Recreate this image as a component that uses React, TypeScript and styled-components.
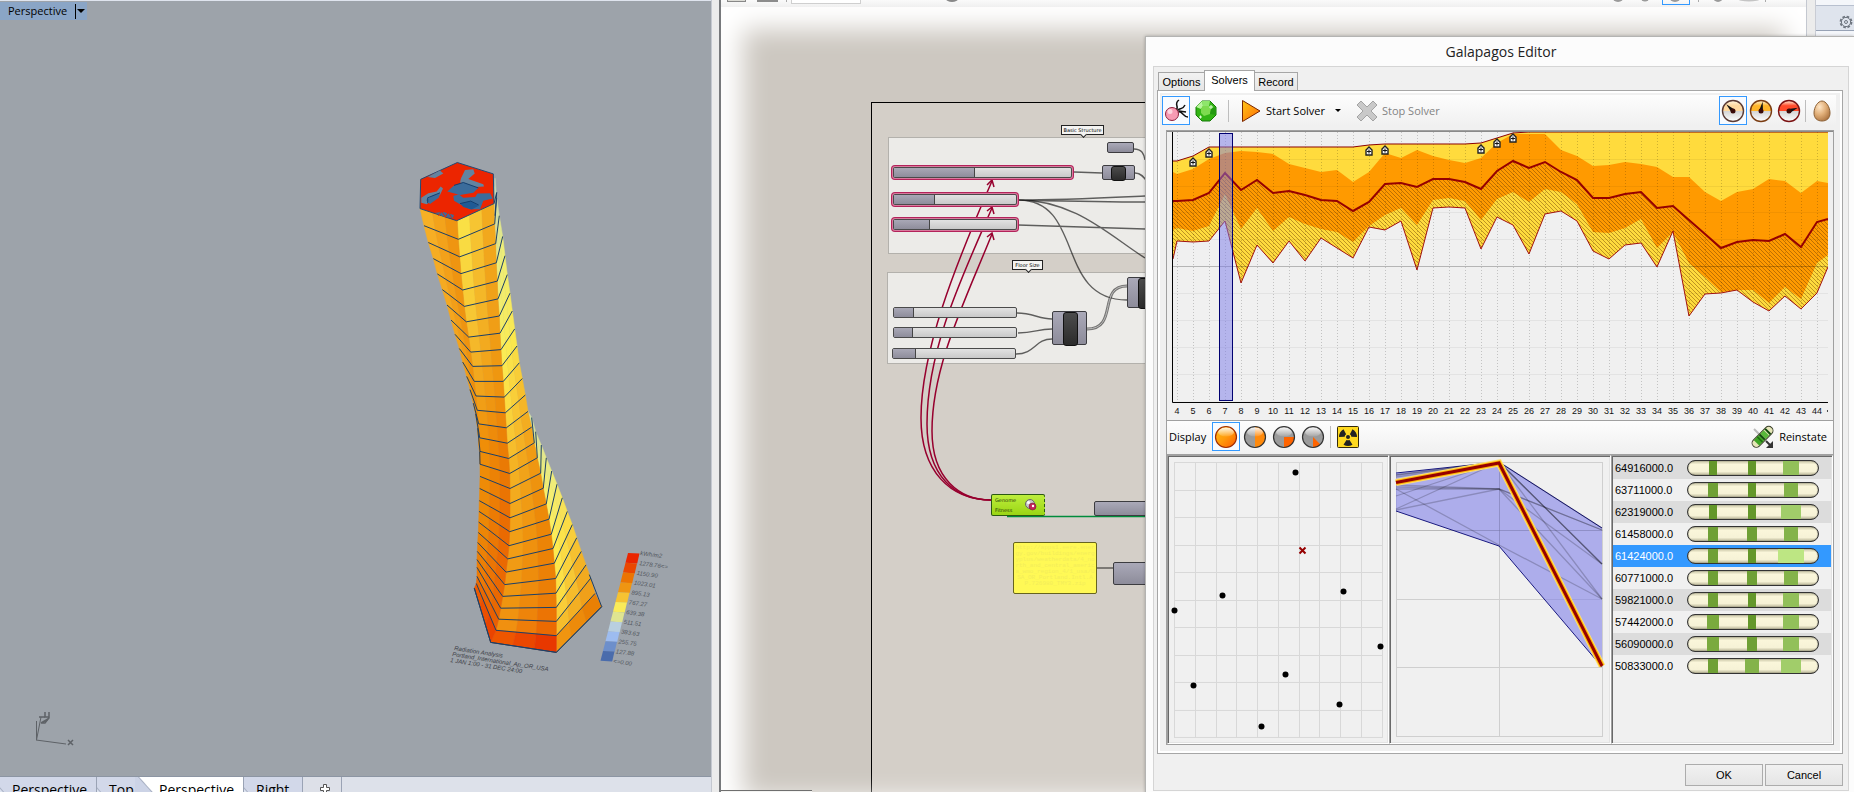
import React from "react";
import styled, { createGlobalStyle } from "styled-components";

const UI = `"Liberation Sans", Arial, sans-serif`;
const SEGOE = `"Open Sans", "Noto Sans", sans-serif`;

const GlobalStyle = createGlobalStyle`
  * { box-sizing: border-box; }
  body { margin: 0; background: #f0f0f0; font-family: ${SEGOE}; font-size: 12px; color: #000; }
  button { font: inherit; color: inherit; margin: 0; padding: 0; border: 0; background: none; }
  svg { display: block; }
`;

/* ---------- desktop ---------- */

const Desktop = styled.div`
  position: relative;
  display: grid;
  grid-template-columns: 711fr 10px 1085fr 10px 38fr;
  height: 100vh;
  overflow: hidden;
`;

const Viewport = styled.section`
  display: grid;
  grid-template-rows: 1fr 15px;
  min-width: 0;
  border-top: 1px solid #dfe4ee;
  overflow: hidden;
`;

const Scene = styled.div`
  position: relative;
  background: #9da3aa;
  border-bottom: 1px solid #8c95a3;
  overflow: hidden;
`;

const SceneDrawing = styled.svg`
  width: 711px;
  height: 775px;
`;

const ViewTitle = styled.button`
  position: absolute;
  left: 0;
  top: 1px;
  display: flex;
  align-items: center;
  height: 18px;
  padding: 0 2px 0 8px;
  background: #8aa5c6;
  font-size: 11px;
  line-height: 18px;
`;

const TitleRule = styled.span`
  width: 1px;
  height: 15px;
  margin: 0 1px 0 8px;
  background: #000;
`;

const Caret = styled.span`
  border: 4px solid transparent;
  border-top-color: #000;
  border-bottom: 0;
`;

const SmallCaret = styled(Caret)`
  border-width: 3px;
  border-bottom: 0;
`;

const ViewTabs = styled.nav`
  display: flex;
  background: #dde1ea;
  overflow: hidden;
`;

const ViewTab = styled.button<{ $w: number; $active?: boolean }>`
  flex: 0 0 ${(p) => p.$w}px;
  height: 26px;
  padding-left: ${(p) => (p.$active ? 24 : 12)}px;
  border-right: ${(p) => (p.$w === 38 ? 0 : 1)}px solid #9aa3b5;
  background: ${(p) =>
    p.$active
      ? "linear-gradient(48deg, #ccd3e6 19px, #a9b1c4 20px, #fff 21px)"
      : "linear-gradient(48deg, #dde3f0 9px, #a9b1c4 10px, #d2d8e9 11px)"};
  font-size: 14px;
  line-height: 24px;
  text-align: left;
`;

const AddViewTab = styled(ViewTab)`
  padding: 0 0 2px 17px;
  background: #dde0e8;
`;

const Splitter = styled.div<{ $dark?: boolean }>`
  background: #ececec;
  border-left: 1px solid #c4c8d0;
  border-right: ${(p) => (p.$dark ? "2px solid #77797c" : "1px solid #c9ccd4")};
`;

const Grasshopper = styled.section`
  position: relative;
  display: grid;
  grid-template-rows: 7px 1fr;
  min-width: 0;
  background: #fff;
`;

const TopBar = styled.div`
  background: linear-gradient(#fafafa, #f0f0f0);
  overflow: hidden;
`;

const StatusTip = styled.div`
  position: absolute;
  left: 0;
  bottom: 0;
  width: 91px;
  height: 2px;
  border-top: 1px solid #6f6f6f;
  background: #f4f4f2;
`;

const Canvas = styled.div`
  position: relative;
  min-width: 0;
  margin-bottom: -28px;
  background: #cdc8c1;
  overflow: hidden;
`;

const Vignette = styled.div`
  position: absolute;
  inset: 0;
  box-shadow: inset 0 0 26px 22px #fff;
  pointer-events: none;
`;

const SidePanel = styled.aside`
  padding-top: 5px;
  background: #f4f6fa;
`;

const SideTab = styled.button`
  display: flex;
  align-items: center;
  justify-content: flex-end;
  width: 100%;
  height: 26px;
  padding: 8px 1px 0 0;
  border-top: 1px solid #b8c0cf;
  border-bottom: 1px solid #97a2b5;
  background: #dfe4ed;
`;

/* ---------- node canvas ---------- */

type Box = { $x: number; $y: number; $w: number; $h: number };

const Placed = styled.div<Box>`
  position: absolute;
  left: ${(p) => p.$x}px;
  top: ${(p) => p.$y}px;
  width: ${(p) => p.$w}px;
  height: ${(p) => p.$h}px;
`;

const Frame = styled(Placed)`
  background: #d4cfc8;
  border: 1px solid #000;
`;

const Group = styled(Placed)`
  background: #ecebe8;
  border: 1px solid #b3b1ac;
`;

const Wires = styled.svg`
  position: absolute;
  left: 0;
  top: 1px;
`;

const Slider = styled(Placed)<{ $fill: number; $selected?: boolean }>`
  border: 1px solid #4a4a4a;
  border-radius: 2px;
  box-shadow: ${(p) => (p.$selected ? "0 0 0 1px #d9799d, 0 0 0 2px #b3235a" : "none")};
  background: linear-gradient(#e2e2e2, #c9c9c9);
  &::before {
    content: "";
    display: block;
    width: ${(p) => p.$fill}px;
    height: 100%;
    border-right: 1px solid #444;
    background: linear-gradient(#a9a8b6, #8e8d9b);
  }
`;

const Component = styled(Placed)<{ $core?: number; $coreW?: number }>`
  border: 1px solid #3c3c40;
  border-radius: 2px;
  background: linear-gradient(#aaa9b8, #8d8c9a);
  &::before {
    content: "";
    display: ${(p) => (p.$core ? "block" : "none")};
    width: ${(p) => p.$coreW}px;
    height: 100%;
    margin-left: ${(p) => p.$core}px;
    border-radius: 3px;
    border: 1px solid #111;
    background: linear-gradient(#4c4c4c, #2b2b2b);
  }
`;

const Callout = styled(Placed)`
  border: 1px solid #222;
  background: #f4f4f2;
  font: 5px/8px "DejaVu Sans", sans-serif;
  text-align: center;
  white-space: nowrap;
  &::after {
    content: "";
    position: absolute;
    left: calc(50% - 2px);
    top: 6px;
    width: 4px;
    height: 4px;
    border: solid #222;
    border-width: 0 1px 1px 0;
    background: #f4f4f2;
    rotate: 45deg;
  }
`;

const GalapagosNode = styled(Placed)`
  display: flex;
  align-items: center;
  justify-content: space-between;
  padding: 0 7px 0 3px;
  border: 1px solid #2b5a12;
  border-right: 1px dashed #2b5a12;
  border-radius: 2px;
  background: linear-gradient(#bdee3c, #9ad514);
  font: 5px/10px "DejaVu Sans", sans-serif;
  color: #263b08;
`;

const Note = styled(Placed)`
  padding: 2px 1px;
  border: 1px solid #66641f;
  border-radius: 2px;
  background: #fff956;
  color: #f3ed5a;
  font: 6px/6px "Liberation Mono", monospace;
  word-break: break-all;
  text-align: center;
  overflow: hidden;
`;

/* ---------- dialog ---------- */

const Dialog = styled.section`
  position: absolute;
  left: 61.76%;
  right: 0;
  top: 36px;
  padding: 0 5px 8px 7px;
  border: 1px solid #b4b4b2;
  border-right: 0;
  background: #fcfcfc;
  box-shadow: 0 0 3px rgba(0, 0, 0, 0.25);
`;

const DialogTitle = styled.h1`
  margin: 0;
  height: 29px;
  font-size: 14px;
  line-height: 30px;
  font-weight: 400;
  text-align: center;
  color: #222;
`;

const Client = styled.div`
  padding: 3px 5px 4px 3px;
  border: 1px solid #d5d5d5;
  background: #f0f0f0;
  font-family: ${UI};
  font-size: 11px;
`;

const TabStrip = styled.div`
  display: flex;
  align-items: flex-end;
  height: 20px;
  padding-left: 1px;
`;

const Tab = styled.button<{ $w: number; $active?: boolean }>`
  position: relative;
  width: ${(p) => p.$w}px;
  height: ${(p) => (p.$active ? 21 : 18)}px;
  margin-bottom: ${(p) => (p.$active ? -1 : 0)}px;
  padding-bottom: ${(p) => (p.$active ? 3 : 0)}px;
  border: 1px solid #a6a6a6;
  border-bottom: 0;
  border-right-width: ${(p) => (p.$w === 46 ? 0 : 1)}px;
  border-left-width: ${(p) => (p.$w === 43 ? 0 : 1)}px;
  background: ${(p) => (p.$active ? "#fff" : "linear-gradient(#f2f2f2, #e6e6e6)")};
  line-height: 18px;
`;

const TabPage = styled.div`
  border: 1px solid #a6a6a6;
  padding: 2px;
  background: #fff;
`;

const TabBody = styled.div`
  padding: 2px 6px 6px 6px;
  background: #f0f0f0;
`;

const Toolbar = styled.div`
  display: flex;
  align-items: center;
  background: linear-gradient(#fdfdfd, #f0f0f0);
`;

const MainToolbar = styled(Toolbar)`
  height: 31px;
  margin: 0 -2px 4px -4px;
`;

const Tool = styled.button<{ $on?: boolean }>`
  display: flex;
  align-items: center;
  justify-content: center;
  width: 28px;
  height: 29px;
  border: 1px solid ${(p) => (p.$on ? "#3399ff" : "transparent")};
  background: ${(p) => (p.$on ? "#f8fbff" : "none")};
`;

const TextTool = styled.button`
  display: flex;
  align-items: center;
  gap: 4px;
  height: 29px;
  padding: 0 4px;
  font-family: ${SEGOE};
  font-size: 11px;
  &:disabled { color: #838383; }
`;

const DropTool = styled(Tool)`
  width: 18px;
  margin-right: 5px;
`;

const Sep = styled.span<{ $tight?: boolean }>`
  width: 1px;
  height: 22px;
  margin: 0 ${(p) => (p.$tight ? 2 : 8)}px;
  background: #bdbdbd;
`;

const Gap = styled.span`
  flex: 1;
`;

const ToolPair = styled.div`
  display: flex;
  gap: 2px;
`;

const DisplayLabel = styled.span`
  margin-right: 5px;
  font-family: ${SEGOE};
  font-size: 11px;
`;

const Board = styled.div`
  border: 1px solid #a0a0a0;
  background: #f0f0f0;
`;

const ChartSvg = styled.svg`
  width: 100%;
  height: auto;
  border-top: 1px solid #8a8a8a;
`;

const DisplayBar = styled(Toolbar)`
  gap: 1px;
  height: 35px;
  padding: 0 2px 1px;
  border-top: 1px solid #a0a0a0;
  border-bottom: 1px solid #a0a0a0;
`;

const Panels = styled.div`
  display: grid;
  grid-template-columns: 1fr 1fr 1fr;
`;

const Panel = styled.div`
  height: 289px;
  border: 1px solid;
  border-color: #a0a0a0 #fff #fff #a0a0a0;
  box-shadow: inset 1px 1px #696969, inset -1px -1px #e3e3e3;
  background: #f0f0f0;
  overflow: hidden;
`;

const PanelSvg = styled.svg`
  width: 100%;
  height: 100%;
`;

const GenomeTable = styled.table`
  width: calc(100% - 2px);
  margin: 1px 0 0 1px;
  border-collapse: collapse;
`;

const GenomeRow = styled.tr<{ $selected?: boolean }>`
  height: 22px;
  &:nth-child(odd) { background: #dcdcdc; }
  &:nth-child(n) {
    ${(p) => (p.$selected ? "background: #3399ff; color: #fff;" : "")}
  }
  td { padding: 0 0 0 2px; }
  td:first-child { width: 72px; }
`;

const Capsule = styled.span`
  position: relative;
  display: grid;
  grid-template-columns: 5px 39px 39px 39px 1fr;
  justify-items: center;
  width: 132px;
  height: 16px;
  border: 1px solid #333;
  border-radius: 8px;
  background: linear-gradient(#c9c5a6, #faf6da 25%, #f6f2d6 75%, #bab698);
  box-shadow: inset 0 0 1px #222;
  overflow: hidden;
  &::before { content: ""; }
`;

const Gene = styled.i<{ $w: number; $c: string }>`
  width: ${(p) => p.$w}px;
  height: 14px;
  background: ${(p) => p.$c};
`;

const Footer = styled.div`
  display: flex;
  justify-content: flex-end;
  gap: 2px;
  padding: 10px 0 0;
`;

const PushButton = styled.button`
  width: 78px;
  height: 22px;
  border: 1px solid #acacac;
  background: linear-gradient(#f1f1f1, #e5e5e5);
  line-height: 20px;
`;

/* ---------- tower ---------- */

type Pt = [number, number];
const tp = ([x, y]: Pt): Pt => [380 + x / 3, 130 + y * 0.3571];

const colL: Pt[] = [[120, 220], [132, 268], [145, 315], [160, 360], [172, 403], [187, 447], [201, 490], [213, 532], [225, 572], [238, 612], [248, 650], [260, 690], [270, 727], [280, 765], [287, 795], [293, 835], [299, 900]];
const colM: Pt[] = [[232, 254], [235, 306], [239, 355], [243, 402], [248, 448], [253, 494], [259, 537], [266, 580], [272, 622], [278, 662], [283, 704], [288, 745], [292, 785], [296, 823], [299, 862], [300, 900], [300, 936], [300, 970], [299, 1004], [298, 1038], [297, 1068], [296, 1098], [295, 1127], [293, 1155], [292, 1180], [291, 1203], [291, 1225], [291, 1250], [289, 1270], [283, 1283]];
const colR: Pt[] = [[342, 206], [344, 263], [347, 318], [349, 372], [352, 423], [354, 473], [358, 521], [360, 569], [363, 615], [366, 660], [370, 704], [373, 748], [376, 792], [379, 834], [382, 877], [386, 920], [389, 962], [390, 1004], [390, 1046], [390, 1086], [389, 1125], [387, 1164], [383, 1201], [378, 1238], [374, 1273], [368, 1306], [362, 1339], [356, 1370], [348, 1401], [332, 1435]];
const colF: Pt[] = [[345, 135], [350, 190], [358, 240], [368, 298], [375, 352], [382, 405], [390, 457], [397, 507], [404, 557], [411, 605], [418, 652], [427, 696], [436, 742], [444, 788], [455, 832], [463, 876], [472, 918], [482, 961], [490, 1003], [499, 1047], [507, 1090], [514, 1132], [519, 1172], [523, 1213], [527, 1256], [528, 1297], [529, 1337], [529, 1376], [529, 1416], [529, 1463]];
const colG: Pt[] = [[444, 788], [455, 805], [467, 845], [484, 882], [499, 918], [515, 955], [531, 992], [547, 1030], [562, 1068], [577, 1105], [590, 1142], [604, 1180], [618, 1218], [632, 1255], [645, 1298], [665, 1335]];

type Stop = [number, string, string];
const faces: { a: Pt[]; b: Pt[]; from: number; bOff: number; n: number; stops: Stop[] }[] = [
  { a: colL, b: colM, from: 0, bOff: 0, n: 16, stops: [[0, "f7b025", "ef9511"], [8, "f3a31c", "ee930f"], [16, "ee9008", "ea8000"]] },
  { a: colM, b: colR, from: 0, bOff: 0, n: 29, stops: [[0, "fae045", "f2aa1e"], [5, "f7c734", "f0a018"], [9, "f2a81f", "ef9710"], [14, "ef8e08", "ea7d04"], [20, "ec8806", "ea6a02"], [26, "ec7a05", "e96802"], [27, "ea6a02", "ea6002"], [28, "ee5a00", "ea4400"]] },
  { a: colR, b: colF, from: 0, bOff: 0, n: 29, stops: [[0, "cddcae", "c5d8b4"], [3, "e8ec80", "eeee78"], [8, "fbec55", "fbe84c"], [11, "fbdc43", "f6bf2e"], [15, "f4b324", "f09b14"], [20, "f19f16", "ec8606"], [25, "ef9510", "ec7d06"], [27, "f09010", "eb6a02"], [28, "ee5600", "e83800"]] },
  { a: colF, b: colG, from: 14, bOff: -14, n: 29, stops: [[14, "e6ec80", "cfe0a8"], [19, "f9f06a", "f0ec78"], [22, "fdea50", "fbdc45"], [25, "fbdd43", "f3b326"], [27, "f6bd2c", "f0a01a"], [28, "f09510", "e98004"]] },
];

const mixHex = (a: string, b: string, t: number) =>
  "#" + [0, 2, 4].map((i) => {
    const u = parseInt(a.slice(i, i + 2), 16);
    const v = parseInt(b.slice(i, i + 2), 16);
    return Math.round(u + (v - u) * t).toString(16).padStart(2, "0");
  }).join("");

const shade = (stops: Stop[], k: number, t: number) => {
  let i = 0;
  while (i < stops.length - 2 && stops[i + 1][0] <= k) i++;
  const [k0, a0, b0] = stops[i];
  const [k1, a1, b1] = stops[i + 1];
  const u = Math.min(1, Math.max(0, (k - k0) / (k1 - k0)));
  return mixHex(mixHex(a0, a1, u).slice(1), mixHex(b0, b1, u).slice(1), t);
};

const lerp = (a: Pt, b: Pt, t: number): Pt => [a[0] + (b[0] - a[0]) * t, a[1] + (b[1] - a[1]) * t];
const join = (pts: Pt[]) => pts.map((p) => tp(p).map((v) => v.toFixed(1)).join(",")).join(" ");

function Tower() {
  const quads: React.ReactNode[] = [];
  const slabs: React.ReactNode[] = [];
  [...faces].reverse().forEach((f, fi) => {
    for (let k = f.from; k < f.n; k++) {
      const a0 = f.a[k], a1 = f.a[k + 1], b0 = f.b[k + f.bOff], b1 = f.b[k + 1 + f.bOff];
      for (let s = 0; s < 3; s++) {
        const c = shade(f.stops, k, s / 2);
        quads.push(
          <polygon key={`${fi}-${k}-${s}`} fill={c} stroke={c} strokeWidth="0.5"
            points={join([lerp(a0, b0, s / 3), lerp(a0, b0, (s + 1) / 3), lerp(a1, b1, (s + 1) / 3), lerp(a1, b1, s / 3)])} />
        );
      }
      slabs.push(<polyline key={`${fi}-${k}`} points={join([a1, b1])} />);
    }
  });
  return (
    <g>
      {quads}
      <g fill="none" stroke="#1c4068" strokeWidth="1">
        {slabs}
        <polyline points={join([[283, 1283], [332, 1435], [529, 1463], [665, 1335], [628, 1245]])} />
        <polyline points={join([[342, 206], [350, 175], [345, 240]])} />
      </g>
      <polygon fill="#ec2500" stroke="#234a74" points={join([[232, 91], [340, 123], [342, 206], [230, 254], [120, 220], [122, 138]])} />
      <g fill="#6384a0">
        <polygon points={join([[143, 132], [180, 113], [190, 122], [165, 134]])} />
        <polygon points={join([[243, 135], [255, 112], [280, 110], [284, 122], [265, 137], [310, 152], [312, 158], [285, 160], [240, 147]])} />
        <polygon points={join([[124, 190], [145, 177], [170, 172], [182, 158], [189, 164], [180, 182], [140, 208], [124, 204]])} />
      </g>
      <g fill="#3b6c9b">
        <polygon points={join([[202, 172], [222, 155], [250, 147], [295, 162], [280, 176], [240, 182]])} />
        <polygon points={join([[138, 196], [160, 182], [180, 178], [176, 190], [150, 207]])} />
        <polygon points={join([[220, 185], [236, 180], [250, 190], [286, 188], [292, 178], [330, 177], [338, 192], [310, 198], [300, 222], [270, 222], [240, 208], [222, 198]])} />
        <polygon points={join([[165, 232], [190, 230], [222, 238], [218, 247], [190, 242]])} />
      </g>
      <polygon fill="#1f5a95" points={join([[240, 206], [272, 199], [296, 212], [275, 223], [250, 216]])} />
      <g stroke="#123f70" fill="none">
        <polyline points={join([[222, 155], [250, 147], [295, 162]])} />
        <polyline points={join([[143, 205], [143, 190], [180, 176]])} />
        <polyline points={join([[240, 206], [272, 199], [296, 210]])} />
      </g>
      <polyline fill="none" stroke="#ec2500" points={join([[175, 240], [185, 228], [196, 244], [205, 230], [215, 246]])} />
    </g>
  );
}

const legend = ["#ea2500", "#ea4700", "#ec7402", "#ef9512", "#f6c332", "#faeb59", "#dfe491", "#b9cfdf", "#9dbcf0", "#6d8fcb", "#4a6cac"];
const legendText = ["1278.76<=", "1150.90", "1023.01", "895.13", "767.27", "639.38", "511.51", "383.63", "255.75", "127.88", "<=0.00"];

function SceneView() {
  return (
    <SceneDrawing viewBox="0 1 711 775">
      <Tower />
      {legend.map((c, i) => {
        const x = 628 - i * 2.5, y = 553 + i * 9.8;
        return <polygon key={c} fill={c} points={`${x},${y} ${x + 11.5},${y + 0.6} ${x + 9.2},${y + 10.6} ${x - 2.5},${y + 9.8}`} />;
      })}
      <g fontFamily="Liberation Sans" fontStyle="italic" fontSize="6" fill="#50555c">
        <text transform="translate(640 555) rotate(8)">kWh/m2</text>
        {legendText.map((t, i) => (
          <text key={t} transform={`translate(${639 - i * 2.6} ${565 + i * 9.8}) rotate(8)`}>{t}</text>
        ))}
      </g>
      <g fontFamily="Liberation Sans" fontStyle="italic" fontSize="6" fill="#3c4046">
        <text transform="translate(454 650) rotate(9)">Radiation Analysis</text>
        <text transform="translate(452 656) rotate(9)">Portland_International_Ap_OR_USA</text>
        <text transform="translate(450 662) rotate(9)">1 JAN 1:00 - 31 DEC 24:00</text>
      </g>
      <g fill="none" stroke="#5e6267" transform="translate(0 1)">
        <path d="M36.500 720 V739 L41 716 M36 739 L66 743" />
        <path d="M39 716 h6 M41 722 l7 -4 M41 722 h4 l3 -4" strokeWidth="1.500" />
        <path d="M45 711 v5 h4 M49 711 v6 l-3 3" strokeWidth="1.500" />
        <path d="M68 739 l5 5 M73 739 l-5 5" strokeWidth="1.500" />
      </g>
    </SceneDrawing>
  );
}

/* ---------- toolbar icons ---------- */

const SolverIcon = () => (
  <svg width="24" height="24" viewBox="0 0 24 24">
    <path d="M12 11 C16 8 9 5 15 1 M13 12 C17 7 18 12 21 6 M14 13 C18 11 19 18 24 18 M15 12 l7 1" fill="none" stroke="#111" strokeWidth="1.500" />
    <circle cx="8" cy="15" r="6.500" fill="#f79bb3" stroke="#8e1f3c" />
    <circle cx="6" cy="12.500" r="2.500" fill="#fdd5df" />
  </svg>
);

const GemIcon = () => (
  <svg width="22" height="22" viewBox="0 0 22 22">
    <polygon points="7,1 15,1 21,7 21,15 15,21 7,21 1,15 1,7" fill="#33b414" stroke="#157a06" />
    <polygon points="7,1 15,1 14,6 8,6" fill="#8ee66b" />
    <polygon points="1,7 7,1 8,6 6,9" fill="#b8f59c" />
    <polygon points="8,6 14,6 16,9 15,14 9,16 6,13 6,9" fill="#7edb4f" />
    <polygon points="16,9 21,7 21,15 15,14" fill="#249a10" />
    <path d="M4 17 l3 0 M5.500 15.500 v3 M14 7 h4 M16 5 v4" stroke="#e6ffda" />
  </svg>
);

const PlayIcon = () => (
  <svg width="21" height="24" viewBox="0 0 21 24">
    <defs><linearGradient id="play" x1="0" y1="0" x2="1" y2="1"><stop offset="0" stopColor="#ffc61a" /><stop offset="1" stopColor="#ff6a00" /></linearGradient></defs>
    <polygon points="1.500,1.500 19,12 1.500,22.500" fill="url(#play)" stroke="#7a2600" />
  </svg>
);

const StopIcon = () => (
  <svg width="22" height="22" viewBox="0 0 22 22">
    <path d="M5 1 L11 7 L17 1 L21 5 L15 11 L21 17 L17 21 L11 15 L5 21 L1 17 L7 11 L1 5 Z" fill="#c9c9c9" stroke="#a3a3a3" />
  </svg>
);

const GaugeIcon = ({ id, top, rim, angle }: { id: string; top: string; rim: string; angle: number }) => (
  <svg width="24" height="24" viewBox="0 0 24 24">
    <defs>
      <linearGradient id={id} x1="0" x2="0" y1="0" y2="1">
        <stop offset="0" stopColor="#fff6e0" /><stop offset="0.25" stopColor={top} /><stop offset="0.5" stopColor={top} />
        <stop offset="0.5" stopColor="#d4d4d4" /><stop offset="1" stopColor="#fff" />
      </linearGradient>
    </defs>
    <circle cx="12" cy="12" r="10.500" fill={`url(#${id})`} stroke={rim} strokeWidth="1.400" />
    <g transform={`rotate(${angle} 12 12)`}><polygon points="10,12 12,2.500 14,12" fill="#111" /></g>
    <circle cx="12" cy="12" r="2.500" fill="#3a0a08" />
  </svg>
);

const EggIcon = () => (
  <svg width="20" height="24" viewBox="0 0 20 24">
    <defs><radialGradient id="egg" cx="0.35" cy="0.3" r="0.8"><stop offset="0" stopColor="#ffe6c6" /><stop offset="0.5" stopColor="#e0ae78" /><stop offset="1" stopColor="#a86f3c" /></radialGradient></defs>
    <path d="M10 2 C14 2 18 8 18 14 C18 19 15 22 10 22 C5 22 2 19 2 14 C2 8 6 2 10 2 Z" fill="url(#egg)" stroke="#8c6136" />
  </svg>
);

const pie = ["", "M12 12 V1.500 A10.500 10.500 0 0 1 12 22.500 Z", "M12 12 H22.500 A10.500 10.500 0 0 1 12 22.500 Z", "M12 12 L19.400 19.400 A10.500 10.500 0 0 1 12 22.500 Z"];

const PieIcon = ({ n }: { n: number }) => (
  <svg width="24" height="24" viewBox="0 0 24 24">
    <defs>
      <linearGradient id={`hot${n}`} x1="0" y1="0" x2="1" y2="1"><stop offset="0" stopColor="#ffbf1a" /><stop offset="0.5" stopColor="#ff9a0a" /><stop offset="1" stopColor="#ff5a00" /></linearGradient>
      <linearGradient id={`shine${n}`} x1="0" y1="0" x2="0" y2="1"><stop offset="0" stopColor="#fff" stopOpacity="0.9" /><stop offset="1" stopColor="#fff" stopOpacity="0.1" /></linearGradient>
    </defs>
    <circle cx="12" cy="12" r="10.500" fill={n === 0 ? `url(#hot${n})` : "#9b9b9b"} />
    {n > 0 && <path d={pie[n]} fill={n === 1 ? "#ff8a0c" : "#ff6400"} />}
    <ellipse cx="12" cy="7" rx="8" ry="4.500" fill={`url(#shine${n})`} />
    <circle cx="12" cy="12" r="10.500" fill="none" stroke={n === 0 ? "#a02c00" : "#333"} strokeWidth="1.200" />
  </svg>
);

const RadiationIcon = () => (
  <svg width="22" height="22" viewBox="0 0 22 22">
    <rect x="0.500" y="0.500" width="21" height="21" rx="1" fill="#ffd91f" stroke="#33290a" />
    {[0, 120, 240].map((a) => (
      <path key={a} transform={`rotate(${a} 11 11)`} d="M9.500 14 L6.500 18.800 A9 9 0 0 0 15.500 18.800 L12.500 14 A3.400 3.400 0 0 1 9.500 14 Z" fill="#222" />
    ))}
    <circle cx="11" cy="11" r="2" fill="#222" />
  </svg>
);

const ReinstateIcon = () => (
  <svg width="24" height="24" viewBox="0 0 24 24">
    <path d="M3 4 l6 6" stroke="#bbb" strokeWidth="2" />
    <g transform="rotate(-45 11 12)">
      <rect x="-1.500" y="8" width="26" height="8.500" rx="4.200" fill="#e6e6b8" stroke="#3a3f2a" />
      <rect x="3" y="8.500" width="7" height="7.500" fill="#3fa524" /><rect x="12" y="8.500" width="5" height="7.500" fill="#59b83b" />
      <rect x="10" y="8.500" width="2" height="7.500" fill="#0e4a0a" /><rect x="18" y="8.500" width="2" height="7.500" fill="#0e4a0a" />
      <rect x="7" y="8.500" width="1.500" height="7.500" fill="#1f6f12" />
    </g>
    <path d="M15 16 l5 5" stroke="#333" strokeWidth="2" />
    <path d="M22 16 v7 h-7 Z" fill="#333" />
  </svg>
);

/* ---------- fitness chart ---------- */

const gens = Array.from({ length: 41 }, (_, i) => i + 4);
const gx = (g: number) => 10 + (g - 4) * 16;
const xs = [6, ...gens.map(gx), 661];

const best = [29, 29, 24, 15, 15, 15, 15, 15, 15, 15, 15, 15, 15, 13, 12, 12, 12, 12, 12, 12, 11, 6, 1, ...Array(20).fill(0)];
const upper = [40, 42, 37, 27, 21, 19, 20, 22, 32, 36, 40, 38, 50, 40, 21, 26, 18, 24, 28, 31, 26, 11, 2, 2, 2, 18, 24, 34, 33, 30, 32, 35, 45, 45, 60, 69, 60, 57, 47, 49, 61, 49, 51];
const mean = [69, 69, 68, 61, 41, 58, 48, 61, 59, 63, 68, 69, 79, 70, 52, 51, 55, 47, 47, 50, 57, 39, 29, 36, 30, 40, 48, 66, 66, 62, 60, 76, 74, 88, 102, 116, 110, 108, 109, 102, 115, 90, 87];
const lower = [98, 96, 99, 94, 62, 97, 76, 99, 85, 92, 97, 100, 110, 94, 83, 76, 93, 68, 66, 69, 88, 67, 60, 70, 57, 60, 72, 100, 101, 96, 87, 116, 100, 131, 145, 160, 158, 158, 171, 155, 167, 131, 123];
const worst = [127, 109, 110, 109, 89, 151, 113, 131, 109, 129, 106, 116, 126, 95, 98, 89, 138, 76, 75, 76, 117, 85, 93, 122, 82, 79, 89, 119, 127, 113, 111, 135, 99, 184, 162, 161, 158, 170, 179, 164, 177, 161, 135];

const line = (ys: number[]) => ys.map((y, i) => `${xs[i]},${y}`).join(" ");
const band = (a: number[], b: number[]) =>
  line(a) + " " + b.map((y, i) => `${xs[i]},${y}`).reverse().join(" ");

const marks: Pt[] = [[5, 31], [6, 22], [16, 20], [17, 19], [23, 18], [24, 12], [25, 7]];

function FitnessChart() {
  return (
    <ChartSvg viewBox="0 0 666 288">
      <defs>
        <pattern id="hatch" width="4" height="4" patternUnits="userSpaceOnUse">
          <path d="M-1 -1 L5 5 M-1 3 L1 5 M3 -1 L5 1" stroke="#6b3a00" strokeOpacity="0.5" strokeWidth="0.900" />
        </pattern>
        <clipPath id="plot"><rect x="5" y="0" width="656" height="288" /></clipPath>
      </defs>
      <g clipPath="url(#plot)">
        <polygon points={band(best, worst)} fill="#ffdb3d" />
        <polygon points={band(upper, lower)} fill="#ff9a00" />
        <polygon points={band(mean, worst)} fill="url(#hatch)" />
        {gens.map((g) => (
          <line key={g} x1={gx(g) + 0.5} x2={gx(g) + 0.5} y1="0" y2="270" stroke="#000" strokeOpacity="0.2" strokeDasharray="1 2" />
        ))}
        {[28, 55, 81, 108, 162, 189, 216, 243].map((y) => (
          <line key={y} x1="6" x2="661" y1={y - 0.5} y2={y - 0.5} stroke="#000" strokeOpacity="0.06" />
        ))}
        <line x1="6" x2="661" y1="134.500" y2="134.500" stroke="#000" strokeOpacity="0.25" />
        <polyline points={line(best)} fill="none" stroke="#8b0000" />
        <polyline points={line(worst)} fill="none" stroke="#a01010" />
        <polyline points={line(mean)} fill="none" stroke="#960000" strokeWidth="2" />
        {marks.map(([g, y]) => (
          <g key={g} transform={`translate(${gx(g)} ${y - 1})`}>
            <path d="M-3 4 V-1 L0 -4 L3 -1 V4 Z" fill="#f4f4f4" stroke="#222" strokeWidth="1.400" />
            <path d="M0 -1.500 V2.500 M-2 0.500 H2" stroke="#111" />
          </g>
        ))}
        <rect x="52.500" y="1.500" width="13" height="267" fill="#7a7ae8" fillOpacity="0.5" stroke="#000070" />
        <g fontFamily="Liberation Sans" fontSize="9" textAnchor="middle" fill="#111">
          {gens.map((g) => <text key={g} x={gx(g)} y="282">{g}</text>)}
        </g>
        <rect x="660" y="278" width="1" height="2" fill="#444" />
      </g>
      <path d="M5.500 0 V270.500 H661" fill="none" stroke="#000" />
    </ChartSvg>
  );
}

const dots: Pt[] = [[126, 15], [53, 138], [5, 153], [174, 134], [211, 189], [116, 217], [24, 228], [170, 247], [92, 269]];

function GenomeMap() {
  const steps = Array.from({ length: 11 }, (_, i) => i);
  return (
    <PanelSvg viewBox="-1 -1 220 287" preserveAspectRatio="xMinYMin meet">
      <g stroke="#d8d8d8">
        {steps.map((i) => <line key={i} x1={Math.round(5 + i * 20.75) + 0.5} x2={Math.round(5 + i * 20.75) + 0.5} y1="5" y2="281" />)}
        {steps.map((i) => <line key={i} y1={Math.round(5 + i * 27.5) + 0.5} y2={Math.round(5 + i * 27.5) + 0.5} x1="5" x2="213" />)}
      </g>
      {dots.map(([x, y]) => <circle key={x} cx={x + 0.5} cy={y + 0.5} r="3" />)}
      <path d="M130.500 90.500 l6 6 M136.500 90.500 l-6 6" stroke="#960000" strokeWidth="2" />
    </PanelSvg>
  );
}

const traces = ["5,18 108,5 211,71", "5,32 108,32 211,73", "5,28 108,32 211,142", "5,39 108,5 211,107", "5,52 108,5 211,107", "5,53 108,32 211,107", "5,32 108,88 211,142", "5,18 108,5 211,107", "5,20 108,5 211,142", "5,30 108,32 211,73"];

function GenomeGraph() {
  return (
    <PanelSvg viewBox="-1 -1 220 287" preserveAspectRatio="xMinYMin meet">
      <path d="M5 5.500 H212 M5 73.500 H212 M5 142.500 H212 M5 210.500 H212 M5 279.500 H212 M5.500 5 V279 M108.500 5 V279 M211.500 5 V279" stroke="#cfcfcf" />
      <polygon points="5,16 108,5 211,71 211,210 108,89 5,54" fill="#8080e8" fillOpacity="0.6" />
      <path d="M5 16 L108 5 L211 71 M5 54 L108 89 L211 210" fill="none" stroke="#1a1a80" />
      <path d="M5 73.500 H212 M108.500 5 V89" stroke="#000" strokeOpacity="0.1" />
      <g fill="none" stroke="#000" strokeOpacity="0.2" strokeWidth="1.300">
        {traces.map((t) => <polyline key={t} points={t} />)}
      </g>
      <polyline points="5,25.500 108,6 211,209" fill="none" stroke="#ffe070" strokeWidth="7" />
      <polyline points="5,25.500 108,6 211,209" fill="none" stroke="#ffb400" strokeWidth="5" />
      <polyline points="5,25.500 108,6 211,209" fill="none" stroke="#960000" strokeWidth="3" />
    </PanelSvg>
  );
}

const geneColor: Record<number, string> = { 8: "#64972a", 10: "#6fa035", 12: "#7aaa3e", 14: "#84b34a", 16: "#92c05a", 20: "#a1cd6a", 26: "#bde683" };
const genomes: [string, number[]][] = [
  ["64916000.0", [8, 8, 16]],
  ["63711000.0", [10, 8, 14]],
  ["62319000.0", [8, 8, 20]],
  ["61458000.0", [10, 10, 14]],
  ["61424000.0", [10, 8, 26]],
  ["60771000.0", [10, 10, 14]],
  ["59821000.0", [10, 8, 16]],
  ["57442000.0", [12, 8, 16]],
  ["56090000.0", [12, 10, 16]],
  ["50833000.0", [10, 14, 20]],
];

function GalapagosDialog() {
  return (
    <Dialog aria-label="Galapagos Editor">
      <DialogTitle>Galapagos Editor</DialogTitle>
      <Client>
        <TabStrip role="tablist">
          <Tab $w={46} role="tab">Options</Tab>
          <Tab $w={51} $active role="tab">Solvers</Tab>
          <Tab $w={43} role="tab">Record</Tab>
        </TabStrip>
        <TabPage>
          <TabBody>
            <MainToolbar>
              <ToolPair>
                <Tool $on aria-label="Evolutionary solver"><SolverIcon /></Tool>
                <Tool aria-label="Annealing solver"><GemIcon /></Tool>
              </ToolPair>
              <Sep />
              <TextTool><PlayIcon />Start Solver</TextTool>
              <DropTool aria-label="Solver options"><SmallCaret /></DropTool>
              <TextTool disabled><StopIcon />Stop Solver</TextTool>
              <Gap />
              <Tool $on aria-label="Slow"><GaugeIcon id="g1" top="#ffd9a0" rim="#5a3a34" angle={-45} /></Tool>
              <Tool aria-label="Medium"><GaugeIcon id="g2" top="#ffb52a" rim="#7a3c12" angle={10} /></Tool>
              <Tool aria-label="Fast"><GaugeIcon id="g3" top="#ff4a2a" rim="#7a1010" angle={70} /></Tool>
              <Sep $tight />
              <Tool aria-label="Bake"><EggIcon /></Tool>
            </MainToolbar>
            <Board>
              <FitnessChart />
              <DisplayBar>
                <DisplayLabel>Display</DisplayLabel>
                {[0, 1, 2, 3].map((n) => (
                  <Tool key={n} $on={n === 0} aria-label={`Display level ${n + 1}`}><PieIcon n={n} /></Tool>
                ))}
                <Sep $tight />
                <Tool aria-label="Radiate"><RadiationIcon /></Tool>
                <Gap />
                <TextTool><ReinstateIcon />Reinstate</TextTool>
              </DisplayBar>
              <Panels>
                <Panel><GenomeMap /></Panel>
                <Panel><GenomeGraph /></Panel>
                <Panel>
                  <GenomeTable>
                    <tbody>
                      {genomes.map(([value, genes], i) => (
                        <GenomeRow key={value} $selected={i === 4}>
                          <td>{value}</td>
                          <td>
                            <Capsule>
                              {genes.map((w, j) => <Gene key={j} $w={w} $c={geneColor[w]} />)}
                            </Capsule>
                          </td>
                        </GenomeRow>
                      ))}
                    </tbody>
                  </GenomeTable>
                </Panel>
              </Panels>
            </Board>
          </TabBody>
        </TabPage>
        <Footer>
          <PushButton>OK</PushButton>
          <PushButton>Cancel</PushButton>
        </Footer>
      </Client>
    </Dialog>
  );
}

function NodeCanvas() {
  return (
    <Canvas>
      <Frame $x={150} $y={95} $w={900} $h={760} />
      <Group $x={167} $y={130} $w={700} $h={117} />
      <Group $x={166} $y={265} $w={700} $h={92} />
      <Wires width="440" height="600" viewBox="0 0 440 600" fill="none">
        <g stroke="#97002e" strokeWidth="1.500">
          <path d="M270 492 C229 492 200 463 200 410 C200 343 234 258 271 173" />
          <path d="M270 492 C234 492 206 468 206 416 C206 343 239 273 271 200" />
          <path d="M270 492 C239 492 211 471 211 423 C211 358 244 293 271 226" />
          <path d="M266 177 L271 172 L273 179 M266 203 L271 199 L273 206 M266 229 L271 225 L273 232" />
        </g>
        <g stroke="#000" strokeOpacity="0.6" strokeWidth="1.400">
          <path d="M353 164 L381 165 M297 192 C340 192 380 190 424 188 M297 192 C340 193 380 194 424 194" />
          <path d="M297 192 C354 192 389 228 424 250 M297 192 C364 192 334 292 406 292 M297 217 L424 221" />
          <path d="M413 141 C421 141 423 146 424 152 M414 165 C420 165 423 169 426 174" />
          <path d="M296 305 C312 305 318 311 331 311 M297 325 C314 325 316 321 331 321 M295 346 C314 346 314 331 331 331" />
          <path d="M366 321 C398 321 376 278 406 278" strokeWidth="3" strokeOpacity="0.5" />
          <path d="M366 321 C398 321 376 278 406 278" stroke="#bbb" strokeWidth="1" strokeOpacity="1" />
          <path d="M375 560 H392" />
        </g>
        <path d="M286 508.500 H440" stroke="#008c3c" strokeWidth="1.500" />
      </Wires>
      <Callout $x={340} $y={118} $w={43} $h={10}>Basic Structure</Callout>
      <Callout $x={291} $y={253} $w={31} $h={10}>Floor Size</Callout>
      <Slider $x={172} $y={160} $w={179} $h={11} $fill={80} $selected />
      <Slider $x={172} $y={187} $w={124} $h={11} $fill={40} $selected />
      <Slider $x={172} $y={212} $w={124} $h={11} $fill={35} $selected />
      <Slider $x={172} $y={300} $w={124} $h={11} $fill={19} />
      <Slider $x={172} $y={320} $w={124} $h={11} $fill={18} />
      <Slider $x={171} $y={341} $w={124} $h={11} $fill={22} />
      <Component $x={386} $y={135} $w={27} $h={11} />
      <Component $x={381} $y={158} $w={33} $h={15} $core={8} $coreW={13} />
      <Component $x={331} $y={304} $w={35} $h={34} $core={10} $coreW={13} />
      <Component $x={406} $y={270} $w={36} $h={31} $core={10} $coreW={14} />
      <GalapagosNode $x={270} $y={487} $w={54} $h={22}>
        <div>Genome<br />Fitness</div>
        <svg width="12" height="12" viewBox="0 0 12 12">
          <circle cx="5" cy="5" r="4.500" fill="#c9c9c9" stroke="#666" />
          <circle cx="3.500" cy="3.500" r="1.500" fill="#fff" />
          <circle cx="7.500" cy="7.500" r="3.500" fill="#c2245a" stroke="#6a1030" strokeWidth="0.500" /><circle cx="8" cy="7" r="1.200" fill="#fff" />
        </svg>
      </GalapagosNode>
      <Component $x={373} $y={494} $w={70} $h={15} />
      <Note $x={292} $y={535} $w={84} $h={52}>
        http://apps1.eere.energy.gov/buildings/energyplus/weatherdata/4_north_and_central_america_wmo_region_4/1_usa/USA_OR_Portland.Intl.AP.726980_TMY3.zip
      </Note>
      <Component $x={392} $y={555} $w={60} $h={23} />
      <Vignette />
    </Canvas>
  );
}

export default function App() {
  return (
    <Desktop>
      <GlobalStyle />
      <Viewport>
        <Scene>
          <SceneView />
          <ViewTitle>Perspective<TitleRule /><Caret /></ViewTitle>
        </Scene>
        <ViewTabs>
          <ViewTab $w={97}>Perspective</ViewTab>
          <ViewTab $w={38}>Top</ViewTab>
          <ViewTab $w={109} $active>Perspective</ViewTab>
          <ViewTab $w={59}>Right</ViewTab>
          <AddViewTab $w={39} aria-label="New viewport">
            <svg width="10" height="10" viewBox="0 0 10 10">
              <path d="M3.500 .5 h3 v3 h3 v3 h-3 v3 h-3 v-3 h-3 v-3 h3 Z" fill="#fff" stroke="#555" />
            </svg>
          </AddViewTab>
        </ViewTabs>
      </Viewport>
      <Splitter $dark />
      <Grasshopper>
        <TopBar>
          <svg width="1085" height="7" viewBox="0 0 1085 7">
            <rect x="6.500" y="-8" width="18" height="9.500" fill="#dcdcd6" stroke="#888" />
            <path d="M36 0 h21 v2 h-21 Z" fill="#8c8c8c" />
            <path d="M65.500 0 V2" stroke="#aaa" />
            <rect x="70.500" y="-8" width="69" height="11.500" fill="#fff" stroke="#cfcfcf" />
            <ellipse cx="231" cy="-1" rx="6" ry="3" fill="#888" />
            <g fill="#9a9a9a"><circle cx="897" cy="-4" r="6" /><circle cx="924" cy="-3" r="4.500" /><circle cx="954" cy="-4" r="6" /><circle cx="997" cy="-3" r="5" /></g>
            <ellipse cx="1028" cy="-1" rx="11" ry="2.500" fill="#c4c4c4" />
            <rect x="941.500" y="-8" width="27" height="12.500" fill="none" stroke="#3399ff" />
            <path d="M977.500 0 V2 M1044.500 0 V2" stroke="#aaa" />
          </svg>
        </TopBar>
        <NodeCanvas />
        <StatusTip />
      </Grasshopper>
      <Splitter />
      <SidePanel>
        <SideTab aria-label="Panel options">
          <svg width="14" height="14" viewBox="0 0 14 14" fill="none" stroke="#6f7680">
            <circle cx="7" cy="7" r="5.500" strokeWidth="1.800" strokeDasharray="2.600 1.720" />
            <circle cx="7" cy="7" r="4.600" /><circle cx="7" cy="7" r="1.500" />
          </svg>
        </SideTab>
      </SidePanel>
      <GalapagosDialog />
    </Desktop>
  );
}
